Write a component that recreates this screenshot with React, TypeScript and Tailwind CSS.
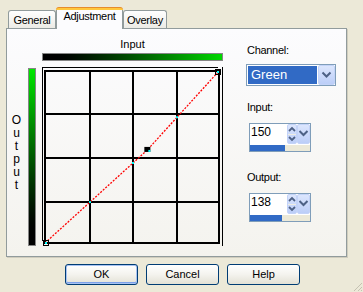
import React from "react";

const font = "font-['Liberation_Sans',Arial,sans-serif]";

function Chevron({ w, h, points }: { w: number; h: number; points: string }) {
  return (
    <svg width={w} height={h} className="block">
      <polyline points={points} fill="none" stroke="#4D6185" strokeWidth={2} />
    </svg>
  );
}

function SpinBox({ value }: { value: number }) {
  const bar = Math.round((value / 255) * 60);
  return (
    <div className="ml-[3px] flex h-[29px] w-[62px] flex-col border border-[#7F9DB9] bg-white">
      <div className="flex h-[20px]">
        <div className="flex-1 pl-[1px] pt-[1px] text-[12px] leading-[14px]">{value}</div>
        <div className="h-[20px] w-[10px] rounded-[2px] border border-[#C3D3F8] bg-linear-to-b from-[#DCE6FD] to-[#BCCEF8]">
          <svg width={8} height={18} className="block">
            <polyline points="1,6 4,3 7,6" fill="none" stroke="#4D6185" strokeWidth={1.8} />
            <line x1={0} y1={9.5} x2={8} y2={9.5} stroke="#EFEDE2" strokeWidth={1} />
            <polyline points="1,12 4,15 7,12" fill="none" stroke="#4D6185" strokeWidth={1.8} />
          </svg>
        </div>
        <div className="h-[20px] w-[13px] rounded-[2px] border border-[#C3D3F8] bg-linear-to-b from-[#DCE6FD] to-[#BCCEF8]">
          <Chevron w={11} h={18} points="1.5,6 5.5,10 9.5,6" />
        </div>
      </div>
      <div className="h-[1px]" />
      <div className="flex h-[6px] bg-[#ECE9D8]">
        <div className="h-full bg-[#316AC5]" style={{ width: bar }} />
      </div>
    </div>
  );
}

function Chart() {
  // page origin (42,67)
  const x0 = 3,
    y0 = 176,
    x1 = 177,
    y1 = 4;
  const px = (v: number) => x0 + (v / 255) * (x1 - x0);
  const py = (v: number) => y0 - (v / 255) * (y0 - y1);
  const mx = px(150);
  const my = py(138);
  const vs = [3, 48, 91, 135, 177];
  const hs = [4, 47, 91, 135, 176];
  const s1 = (my - y0) / (mx - x0);
  const s2 = (y1 - my) / (x1 - mx);
  const cy = (x: number) => (x <= mx ? y0 + (x - x0) * s1 : my + (x - mx) * s2);
  return (
    <svg width={184} height={182} className="block">
      <line x1={0.5} y1={0} x2={0.5} y2={174} stroke="#000" strokeWidth={1} />
      <line x1={0} y1={0.5} x2={176} y2={0.5} stroke="#000" strokeWidth={1} />
      <line x1={180.5} y1={0} x2={180.5} y2={179} stroke="#000" strokeWidth={1} />
      {vs.map((x) => (
        <line key={"v" + x} x1={x} y1={3} x2={x} y2={177} stroke="#000" strokeWidth={2} />
      ))}
      {hs.map((y) => (
        <line key={"h" + y} x1={2} y1={y} x2={178} y2={y} stroke="#000" strokeWidth={2} />
      ))}
      <polyline
        points={`${x0},${y0} ${mx},${my} ${x1},${y1}`}
        fill="none"
        stroke="#FF0000"
        strokeWidth={1.3}
        strokeDasharray="2 1.4"
      />
      {[48, 91, 135].map((x) => (
        <rect key={"c" + x} x={x - 1} y={cy(x) - 1} width={2} height={2} fill="#00FFFF" />
      ))}
      <rect x={1.5} y={173.5} width={5} height={5} fill="none" stroke="#000" strokeWidth={1} />
      <rect x={3} y={175} width={2} height={2} fill="#00FFFF" />
      <rect x={173.5} y={2.5} width={5} height={5} fill="none" stroke="#000" strokeWidth={1} />
      <rect x={175} y={4} width={2} height={2} fill="#00FFFF" />
      <rect x={mx - 3} y={my - 3} width={6} height={5} fill="#000" />
      <rect x={mx + 1} y={my} width={2} height={2} fill="#00FFFF" />
    </svg>
  );
}

function Btn({ label, def }: { label: string; def?: boolean }) {
  return (
    <div
      className={
        "flex h-[21px] w-[73px] items-center justify-center rounded-[3px] border border-[#003C74] bg-linear-to-b from-[#FFFFFF] via-[#F4F3EE] to-[#E3E1D6] text-[11px] leading-[13px] " +
        (def ? "shadow-[inset_0_0_0_1px_#A8C3F2,inset_0_-1px_0_1px_#7CA0EA]" : "")
      }
    >
      {label}
    </div>
  );
}

export default function App() {
  const letters = ["O", "u", "t", "p", "u", "t"];
  return (
    <div className={`relative h-[292px] w-[363px] overflow-hidden bg-[#ECE9D8] text-black ${font}`}>
      {/* Tabs */}
      <div className="flex h-[28px] items-end pl-[8px] text-[11px] leading-[13px] tracking-[-0.3px]">
        <div className="flex h-[18px] w-[48px] justify-center rounded-t-[3px] border-x border-t border-[#919B9C] bg-linear-to-b from-[#FFFFFF] to-[#ECEBE5] pt-[3px]">
          General
        </div>
        <div className="relative z-10 -mb-px flex h-[22px] w-[67px] flex-col">
          <div className="h-[3px] rounded-t-[3px] border-t border-[#E68B2C] bg-[#FFC73C]" />
          <div className="flex flex-1 justify-center border-x border-[#919B9C] bg-[#FCFCFE]">Adjustment</div>
        </div>
        <div className="flex h-[18px] w-[44px] justify-center rounded-t-[3px] border-x border-t border-[#919B9C] bg-linear-to-b from-[#FFFFFF] to-[#ECEBE5] pt-[3px]">
          Overlay
        </div>
      </div>

      {/* Panel */}
      <div className="ml-[6px] flex h-[229px] w-[341px] border border-[#919B9C] bg-linear-to-b from-[#FCFCFE] to-[#F4F3EE] shadow-[1px_1px_0_0_#D0CDBE]">
        {/* Left: chart */}
        <div className="flex w-[239px] flex-col pt-[9px]">
          <div className="ml-[35px] w-[181px] text-center text-[11px] leading-[13px]">Input</div>
          <div className="ml-[35px] mt-[2px] h-[8px] w-[181px] border border-[#858585] bg-linear-to-r from-[#000000] to-[#00D800]" />
          <div className="mt-[6px] flex">
            <div className="flex w-[19px] flex-col items-center pt-[47px] text-[12px] leading-[13px]">
              {letters.map((l, i) => (
                <span key={i}>{l}</span>
              ))}
            </div>
            <div className="ml-[2px] mt-[1px] h-[178px] w-[8px] border border-[#858585] bg-linear-to-b from-[#00E800] to-[#000000]" />
            <div className="ml-[6px]">
              <Chart />
            </div>
          </div>
        </div>

        {/* Right column */}
        <div className="flex flex-col pt-[15px] text-[11px] leading-[13px] tracking-[-0.3px]">
          <div className="pl-[1px]">Channel:</div>
          <div className="mt-[7px] flex h-[22px] w-[90px] border border-[#7F9DB9] bg-white">
            <div className="flex-1 p-[1px]">
              <div className="h-[18px] bg-[#316AC5] pl-[3px] text-[13px] leading-[18px] tracking-normal text-white">
                Green
              </div>
            </div>
            <div className="h-[20px] w-[17px] rounded-[2px] border border-[#C3D3F8] bg-linear-to-b from-[#DCE6FD] to-[#BCCEF8]">
              <Chevron w={15} h={18} points="3.5,6.5 7.5,10.5 11.5,6.5" />
            </div>
          </div>
          <div className="mt-[15px] pl-[1px]">Input:</div>
          <div className="mt-[9px] tracking-normal">
            <SpinBox value={150} />
          </div>
          <div className="mt-[19px] pl-[1px]">Output:</div>
          <div className="mt-[9px] tracking-normal">
            <SpinBox value={138} />
          </div>
        </div>
      </div>

      {/* Buttons */}
      <div className="mt-[7px] flex gap-[8px] pl-[65px]">
        <Btn label="OK" def />
        <Btn label="Cancel" />
        <Btn label="Help" />
      </div>

      {/* size grip */}
      <svg width={12} height={12} className="absolute bottom-0 right-0">
        <line x1={11} y1={3} x2={3} y2={11} stroke="#C5C2B2" strokeWidth={1} />
        <line x1={11} y1={7} x2={7} y2={11} stroke="#C5C2B2" strokeWidth={1} />
        <line x1={11} y1={10} x2={10} y2={11} stroke="#C5C2B2" strokeWidth={1} />
      </svg>
    </div>
  );
}
